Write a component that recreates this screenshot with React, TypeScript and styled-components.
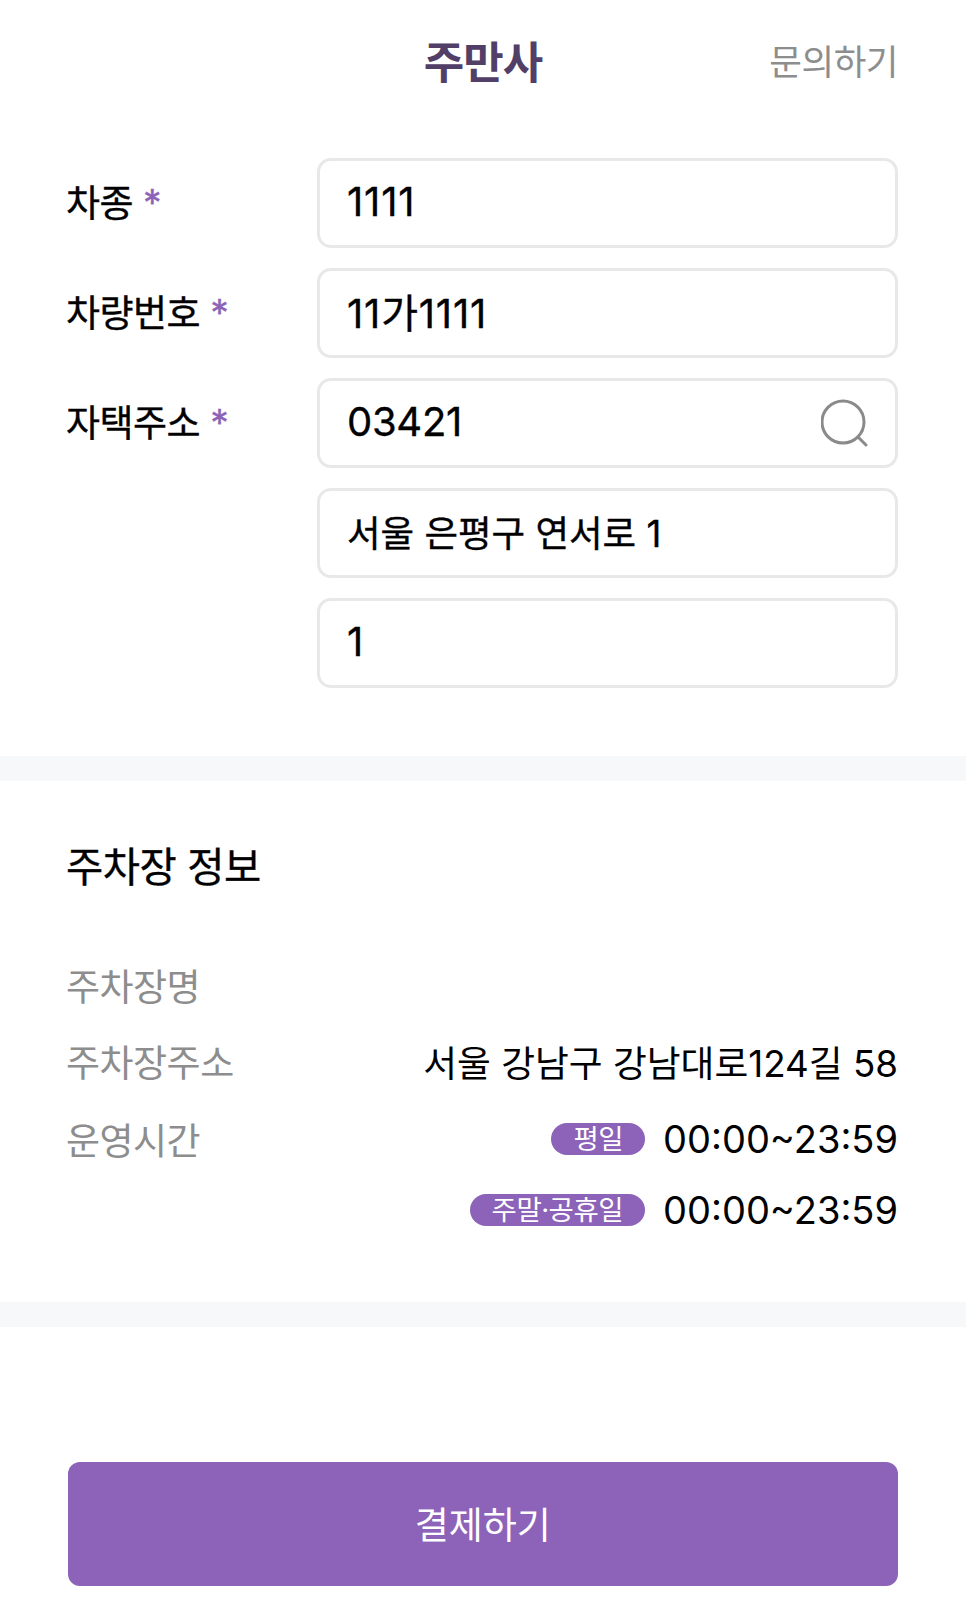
import styled, { createGlobalStyle } from 'styled-components';

const GlobalStyle = createGlobalStyle`
  html, body {
    margin:0;
    padding:0;
    background-color:#fff;
  }
  * {
    box-sizing:border-box;
  }
`

const Page = styled.div`
  width:966px;
  height:1610px;
  overflow:hidden;
  background-color:#fff;
  color:#000;
  font-family:Inter, "Noto Sans CJK KR", sans-serif;
`

const Header = styled.header`
  height:122px;
  padding:0 68px 2px;
  display:grid;
  grid-template-columns:1fr auto 1fr;
  align-items:center;
`

const Title = styled.h1`
  grid-column:2;
  margin:0;
  font-size:44px;
  font-weight:700;
  color:#523f68;
  letter-spacing:-1px;
`

const Inquiry = styled.a`
  justify-self:end;
  margin-bottom:2px;
  font-size:35.5px;
  color:#8d8d8d;
  letter-spacing:-0.5px;
`

const Form = styled.section`
  padding:36px 68px 68px 66px;
  display:flex;
  flex-direction:column;
  gap:20px;
`

const FieldRow = styled.div`
  display:grid;
  grid-template-columns:251px 1fr;
  align-items:start;
`

const Label = styled.label`
  grid-column:1;
  height:90px;
  display:flex;
  align-items:center;
  gap:10px;
  font-size:37px;
  letter-spacing:-0.5px;
  -webkit-text-stroke:0.35px #000;
  padding-bottom:4px;
`

const Star = styled.span`
  padding-top:3px;
  color:#8c63b8;
  font-size:37px;
  -webkit-text-stroke:0.35px #8c63b8;
`

const InputList = styled.div`
  grid-column:2;
  display:flex;
  flex-direction:column;
  gap:20px;
`

const InputBox = styled.div<{ $size?: number; $track?: number }>`
  height:90px;
  padding:0 27px 4px;
  border:3px solid #e8e8e8;
  border-radius:14px;
  display:flex;
  align-items:center;
  justify-content:space-between;
  font-size:${(p) => p.$size ?? 40}px;
  letter-spacing:${(p) => p.$track ?? 0}px;
  -webkit-text-stroke:0.35px #000;
`

const Divider = styled.div`
  height:25px;
  background-color:#f7f8fa;
`

const Info = styled.section`
  height:521px;
  padding:60px 68px 0 66px;
`

const SectionTitle = styled.h2`
  margin:0 0 52px;
  height:54px;
  line-height:54px;
  font-size:40.5px;
  font-weight:400;
  letter-spacing:-0.5px;
  -webkit-text-stroke:0.35px #000;
`

const InfoRow = styled.div<{ $height: number }>`
  height:${(p) => p.$height}px;
  display:flex;
  align-items:center;
  justify-content:space-between;
  font-size:36.75px;
`

const InfoLabel = styled.span`
  color:#8d8d8d;
  font-size:37px;
  letter-spacing:-0.5px;
`

const TimeGroup = styled.div`
  margin-left:auto;
  display:flex;
  align-items:center;
  gap:18px;
`

const Badge = styled.span`
  height:32px;
  padding:0 22px;
  border-radius:16px;
  background-color:#8c63b8;
  color:#fff;
  font-size:27.5px;
  line-height:32px;
  letter-spacing:-0.5px;
`

const Time = styled.span`
  font-size:38px;
`

const Footer = styled.footer`
  padding:135px 68px 0 67.5px;
`

const PayButton = styled.button`
  width:100%;
  height:124px;
  padding:0 0 3px;
  border:none;
  border-radius:12px;
  background-color:#8c63b8;
  color:#fff;
  font-family:inherit;
  font-size:37px;
`

const SearchGlyph = styled.svg`
  margin-right:-3px;
  margin-top:5px;
`

function SearchIcon() {
  return (
    <SearchGlyph width="50" height="50" viewBox="0 0 50 50" fill="none" stroke="#8a8a8a" strokeWidth="3" strokeLinecap="round">
      <circle cx="22" cy="23" r="21" />
      <line x1="37" y1="38" x2="45" y2="46" />
    </SearchGlyph>
  );
}

const hours = [
  { badge: '평일', time: '00:00~23:59', label: '운영시간', height: 79 },
  { badge: '주말·공휴일', time: '00:00~23:59', label: '', height: 64 },
];

export default function App() {
  return (
    <Page>
      <GlobalStyle />
      <Header>
        <Title>주만사</Title>
        <Inquiry>문의하기</Inquiry>
      </Header>
      <Form>
        <FieldRow>
          <Label>차종 <Star>*</Star></Label>
          <InputList>
            <InputBox $track={0.8}>1111</InputBox>
          </InputList>
        </FieldRow>
        <FieldRow>
          <Label>차량번호 <Star>*</Star></Label>
          <InputList>
            <InputBox $track={0.8}>11가1111</InputBox>
          </InputList>
        </FieldRow>
        <FieldRow>
          <Label>자택주소 <Star>*</Star></Label>
          <InputList>
            <InputBox $track={-0.3}>03421<SearchIcon /></InputBox>
            <InputBox $size={36.5}>서울 은평구 연서로 1</InputBox>
            <InputBox>1</InputBox>
          </InputList>
        </FieldRow>
      </Form>
      <Divider />
      <Info>
        <SectionTitle>주차장 정보</SectionTitle>
        <InfoRow $height={76}>
          <InfoLabel>주차장명</InfoLabel>
        </InfoRow>
        <InfoRow $height={76}>
          <InfoLabel>주차장주소</InfoLabel>
          <span>서울 강남구 강남대로124길 58</span>
        </InfoRow>
        {hours.map((h) => (
          <InfoRow key={h.badge} $height={h.height}>
            {h.label && <InfoLabel>{h.label}</InfoLabel>}
            <TimeGroup>
              <Badge>{h.badge}</Badge>
              <Time>{h.time}</Time>
            </TimeGroup>
          </InfoRow>
        ))}
      </Info>
      <Divider />
      <Footer>
        <PayButton>결제하기</PayButton>
      </Footer>
    </Page>
  );
}
